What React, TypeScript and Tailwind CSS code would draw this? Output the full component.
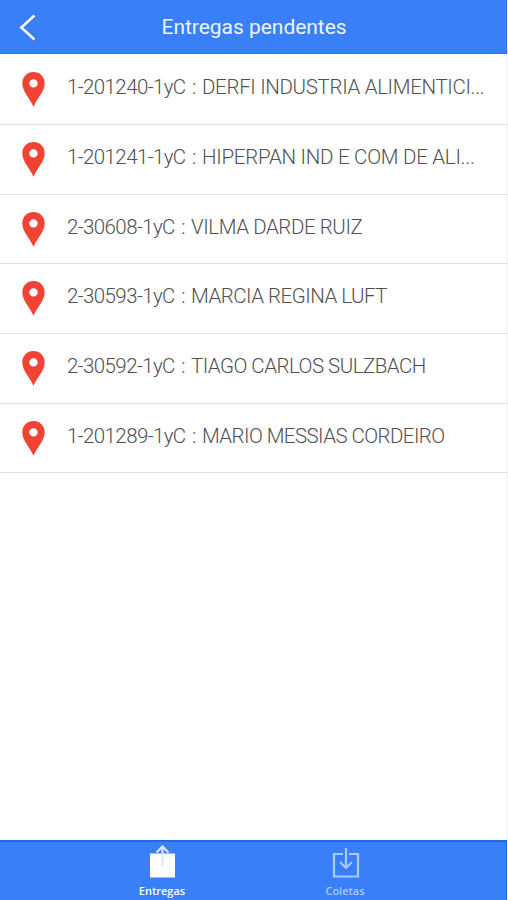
type Delivery = {
  code: string;
  name: string;
  row: string;
  codeClass: string;
  nameClass: string;
};

const deliveries: Delivery[] = [
  { code: "1-201240-1yC", name: "DERFI INDUSTRIA ALIMENTICI...", row: "h-[70px]", codeClass: "w-[135px]", nameClass: "tracking-[-0.33px]" },
  { code: "1-201241-1yC", name: "HIPERPAN IND E COM DE ALI...", row: "h-[70px]", codeClass: "w-[135px]", nameClass: "tracking-[-0.26px]" },
  { code: "2-30608-1yC", name: "VILMA DARDE RUIZ", row: "h-[69px]", codeClass: "w-[124px]", nameClass: "tracking-[-0.42px]" },
  { code: "2-30593-1yC", name: "MARCIA REGINA LUFT", row: "h-[70px]", codeClass: "w-[124px]", nameClass: "tracking-[-0.5px]" },
  { code: "2-30592-1yC", name: "TIAGO CARLOS SULZBACH", row: "h-[70px]", codeClass: "w-[124px]", nameClass: "tracking-[-0.52px]" },
  { code: "1-201289-1yC", name: "MARIO MESSIAS CORDEIRO", row: "h-[69px]", codeClass: "w-[135px]", nameClass: "tracking-[-0.57px]" },
];

function Pin() {
  return (
    <svg className="ml-[22px] mt-[17px] h-[35px] w-[23px] shrink-0" viewBox="0 0 23 35" fill="#f04334">
      <path fillRule="evenodd" d="M11.500 0C5.200 0 0.300 4.800 0.300 11.200c0 8 7.200 14.800 11.200 23.500 4-8.700 11.200-15.500 11.200-23.500C22.700 4.800 17.800 0 11.500 0Zm0 7.200a4.200 4.200 0 1 1 0 8.400 4.200 4.200 0 0 1 0-8.400Z" />
    </svg>
  );
}

export default function App() {
  return (
    <div className="flex h-[900px] w-[508px] flex-col overflow-hidden border-r border-[#edeff2] bg-white font-['Roboto','Liberation_Sans',sans-serif]">
      <header className="flex h-[54px] shrink-0 border-b border-r border-[#2c70e5] bg-[#397ff7]">
        <svg className="ml-[19px] mt-[14px] h-[27px] w-[18px] shrink-0" viewBox="0 0 18 27" fill="none" stroke="white" strokeWidth="2.500">
          <path d="M15.500 1.500 2.300 13.500 15.500 25.500" />
        </svg>
        <h1 className="ml-[124.5px] mt-[12px] whitespace-nowrap text-[21px] leading-[30px] tracking-[-0.03px] text-[#eaf5ff]">Entregas pendentes</h1>
      </header>
      <main className="flex-1 pt-px">
        {deliveries.map((d) => (
          <div key={d.code} className={`flex border-b border-[#e2e2e2] ${d.row}`}>
            <Pin />
            <div className="ml-[22px] mt-[18px] flex whitespace-pre text-[20.5px] font-light leading-[28px] text-[#505050]">
              <span className={`shrink-0 tracking-[-0.6px] ${d.codeClass}`}>
                {d.code}
                <span className="ml-[2px]"> :</span>
              </span>
              <span className={d.nameClass}>{d.name}</span>
            </div>
          </div>
        ))}
      </main>
      <nav className="flex h-[60px] shrink-0 border-r border-t-2 border-[#1d6cdd] bg-[#397ff7] font-['Open_Sans','Noto_Sans',sans-serif] text-[11px] leading-[14px]">
        <div className="ml-[122px] flex w-[80px] flex-col items-center text-white">
          <svg className="mt-[3px] h-[34px] w-[28px]" viewBox="0 0 28 34" fill="none">
            <path fill="white" d="M2 8.500h25v24H2z" />
            <path stroke="#d9e8ff" strokeWidth="2.200" d="M14.500 21V2M8.500 7.500l6-6 6 6" />
          </svg>
          <span className="mt-[5px] font-semibold">Entregas</span>
        </div>
        <div className="ml-[103px] flex w-[80px] flex-col items-center text-[#a9caff]">
          <svg className="ml-px mt-[3px] h-[34px] w-[28px]" viewBox="0 0 28 34" fill="none" stroke="#a9caff" strokeWidth="2.200">
            <path d="M11 9H2v22.500h24V9h-9M14 3v20M8 17l6 6 6-6" />
          </svg>
          <span className="mt-[5px] font-semibold">Coletas</span>
        </div>
      </nav>
    </div>
  );
}
